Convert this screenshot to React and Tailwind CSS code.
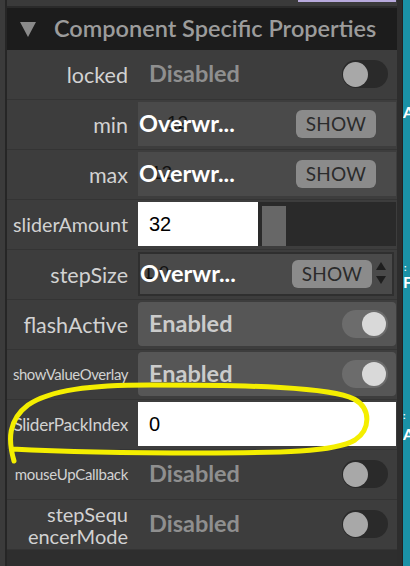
import React from "react";

const lato = { fontFamily: "Lato, 'Noto Sans', sans-serif" };

function Toggle({ on }) {
  return on ? (
    <div className="w-[46px] h-[28px] rounded-full bg-[#6c6c6c] flex items-center justify-end pr-[2px]">
      <div className="w-[24px] h-[24px] rounded-full bg-[#d9d9d9]" />
    </div>
  ) : (
    <div className="w-[46px] h-[28px] rounded-full bg-[#2a2a2a] flex items-center pl-[1px]">
      <div className="w-[25px] h-[25px] rounded-full bg-[#a8a8a8]" />
    </div>
  );
}

function BoolValue({ on }) {
  return (
    <div
      className={`h-full flex items-center justify-between pl-[11px] pr-[8px] rounded-[4px] ${
        on ? "bg-[#565656]" : ""
      }`}
    >
      <span
        className={`text-[23.5px] font-bold ${on ? "text-[#cbcbcb]" : "text-[#8f8f8f]"}`}
      >
        {on ? "Enabled" : "Disabled"}
      </span>
      <Toggle on={on} />
    </div>
  );
}

function OverwriteValue({ num, numClass, bordered, arrows }) {
  return (
    <div
      className={`h-full flex items-center justify-between bg-[#4a4a4a] ${
        bordered ? "border-2 border-[#2f2f2f] mr-[2px] pl-[0px]" : "pl-[1px]"
      } pr-[20px] relative`}
    >
      <div className="grid items-center">
        <span
          className={`col-start-1 row-start-1 text-[19px] text-[#111] leading-none -mt-[3px] ${numClass}`}
          style={{ fontFamily: "'Liberation Sans', sans-serif" }}
        >
          {num}
        </span>
        <span className="col-start-1 row-start-1 text-[23.5px] font-bold text-white leading-none">
          Overwr...
        </span>
      </div>
      <div className="h-[28px] w-[80px] rounded-[6px] bg-[#8b8b8b] flex items-center justify-center text-[19px] text-[#2b2b2b] tracking-[0.3px]">
        SHOW
      </div>
      {arrows && (
        <div className="absolute right-[6px] top-[8px] flex flex-col gap-[6px]">
          <svg width="10" height="8" viewBox="0 0 10 8">
            <path d="M5 0 L10 8 L0 8 Z" fill="#1e1e1e" />
          </svg>
          <svg width="10" height="8" viewBox="0 0 10 8">
            <path d="M0 0 L10 0 L5 8 Z" fill="#1e1e1e" />
          </svg>
        </div>
      )}
    </div>
  );
}

function TextValue({ text, full }) {
  return (
    <div className="h-full flex">
      <div
        className={`h-full bg-white flex items-center pl-[11px] text-[20px] text-black ${
          full ? "flex-1" : "w-[120px]"
        }`}
        style={{ fontFamily: "'Liberation Sans', sans-serif" }}
      >
        {text}
      </div>
      {!full && (
        <div className="flex-1 h-full bg-[#2a2a2a] pl-[4px] pt-[4px]">
          <div className="w-[24px] h-full bg-[#676767]" />
        </div>
      )}
    </div>
  );
}

function Row({ label, labelClass = "text-[21.5px] leading-[22px]", children }) {
  return (
    <div className="flex h-[50px] border-b border-[#343434] bg-[#3d3d3d]">
      <div
        className={`w-[131px] shrink-0 flex items-center justify-end text-right pr-[10px] text-[#d2d2d2] whitespace-nowrap ${labelClass}`}
      >
        {label}
      </div>
      <div className="flex-1 pt-[2px] pb-[3px] pr-[1px]">{children}</div>
    </div>
  );
}

export default function App() {
  return (
    <div
      className="relative w-[410px] h-[566px] overflow-hidden flex bg-[#3a3a3a]"
      style={lato}
    >
      <div className="w-[5px] bg-[#3b3b3b]" />
      <div className="w-[2px] bg-[#262626]" />
      <div className="w-[390px] flex flex-col bg-[#2e2e2e]">
        <div className="h-[6px] bg-[#3a3a3a] flex justify-end pr-[1px]">
          <div className="w-[98px] h-[2px] bg-[#b7a9dc]" />
        </div>
        <div className="h-[2px] bg-[#2a2a2a]" />
        <div className="h-[42px] bg-[#1c1c1c] flex items-center">
          <svg width="16" height="15" viewBox="0 0 16 15" className="ml-[13px]">
            <path d="M0 0 L16 0 L8 15 Z" fill="#8a8a8a" />
          </svg>
          <span className="ml-[18px] text-[23.5px] font-semibold text-[#9c9c9c] whitespace-nowrap">
            Component Specific Properties
          </span>
        </div>
        <Row label="locked">
          <BoolValue on={false} />
        </Row>
        <Row label="min">
          <OverwriteValue num="12" numClass="pl-[28px]" />
        </Row>
        <Row label="max">
          <OverwriteValue num="12" numClass="pl-[12px]" />
        </Row>
        <Row label="sliderAmount" labelClass="text-[19.7px]">
          <TextValue text="32" />
        </Row>
        <Row label="stepSize">
          <OverwriteValue num="1.0" numClass="pl-[3px]" bordered arrows />
        </Row>
        <Row label="flashActive">
          <BoolValue on />
        </Row>
        <Row label="showValueOverlay" labelClass="text-[14.9px] tracking-[-0.4px]">
          <BoolValue on />
        </Row>
        <Row label="SliderPackIndex" labelClass="text-[17.2px] tracking-[-0.3px]">
          <TextValue text="0" full />
        </Row>
        <Row label="mouseUpCallback" labelClass="text-[15px] tracking-[-0.3px]">
          <BoolValue on={false} />
        </Row>
        <Row
          label={<>stepSequ<br />encerMode</>}
          labelClass="text-[20px] leading-[22px]"
        >
          <BoolValue on={false} />
        </Row>
        <div className="flex-1 bg-[#2e2e2e]" />
      </div>
      <div className="w-[5px] bg-[#2d2d2d]" />
      <div className="w-[1px] bg-[#222]" />
      <div className="flex-1 bg-[#1a91a6] flex flex-col text-white text-[16px] font-bold leading-none overflow-hidden">
        <span className="mt-[104px]">A</span>
        <span className="mt-[142px] text-[10px] pl-[1px]">:</span>
        <span className="mt-[2px]">F</span>
        <span className="mt-[120px] text-[10px]">:</span>
        <span className="mt-[6px]">A</span>
      </div>
      <svg
        className="absolute inset-0 pointer-events-none"
        width="410"
        height="566"
        viewBox="0 0 410 566"
      >
        <path
          d="M14 461 C 8 440, 8 420, 28 405 C 50 390, 90 385, 150 385 C 250 385, 330 387, 354 399 C 372 409, 370 430, 355 440 C 335 452, 280 453, 200 453 C 120 453, 50 451, 12 449"
          fill="none"
          stroke="#f4ee00"
          strokeWidth="5"
          strokeLinecap="round"
          strokeLinejoin="round"
        />
      </svg>
    </div>
  );
}
